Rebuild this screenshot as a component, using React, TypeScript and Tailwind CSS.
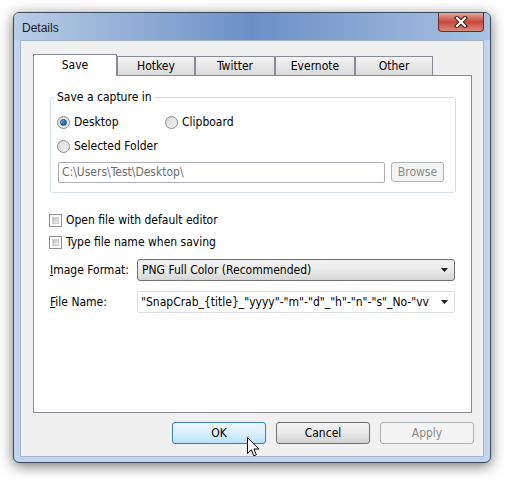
import React from 'react';

const ui = { fontFamily: '"DejaVu Sans Condensed", "DejaVu Sans", sans-serif' };

function Radio({ checked }: { checked?: boolean }) {
  return (
    <span className="w-[13px] h-[13px] rounded-full border border-[#8b8b8b] bg-gradient-to-br from-[#d6d6d6] to-[#f6f6f6] flex items-center justify-center shrink-0">
      {checked && (
        <span className="w-[7px] h-[7px] rounded-full bg-gradient-to-br from-[#8fd0f5] via-[#2f78c2] to-[#1b4f94] border border-[#1f4d86]" />
      )}
    </span>
  );
}

function Checkbox() {
  return (
    <span className="w-[13px] h-[13px] border border-[#8f8f8f] bg-white p-[2px] shrink-0">
      <span className="block w-full h-full bg-gradient-to-br from-[#bcbcbc] to-[#f2f2f2] border border-[#cfcfcf]" />
    </span>
  );
}

function Arrow() {
  return (
    <svg width="7" height="4" viewBox="0 0 7 4">
      <path d="M0 0H7L3.5 4Z" fill="#1a1a1a" />
    </svg>
  );
}

function Cursor() {
  return (
    <svg className="absolute left-[74px] top-[14px] z-20" width="13" height="20" viewBox="0 0 13 20">
      <path
        d="M0.5 0.5V16.5L4.3 12.8L6.8 18.8L9.3 17.8L6.9 12H11.8Z"
        fill="#fff"
        stroke="#000"
        strokeWidth="1"
        strokeLinejoin="round"
      />
    </svg>
  );
}

export default function App() {
  const tabs = [
    { label: 'Hotkey', w: 'w-[78px]' },
    { label: 'Twitter', w: 'w-[80px]' },
    { label: 'Evernote', w: 'w-[80px]' },
    { label: 'Other', w: 'w-[78px]' },
  ];

  return (
    <div className="w-[507px] h-[480px] bg-white pl-[13px] pt-[12px]" style={ui}>
      {/* Window */}
      <div className="w-[478px] h-[451px] rounded-[6px] border border-[#3b4a5e] bg-[#c2d5ec] shadow-[0_3px_14px_rgba(0,0,0,0.55)] flex flex-col overflow-hidden">
        {/* Title bar */}
        <div className="h-[27px] flex items-start bg-gradient-to-r from-[#b9cde6] via-[#6b8fc5] to-[#a9c2e2] shrink-0">
          <span className="pl-[8px] pt-[6px] text-[12px] text-[#1b1b1b]" style={{ fontFamily: '"Liberation Sans", sans-serif' }}>
            Details
          </span>
          <div className="ml-auto mr-[6px] w-[46px] h-[19px] rounded-b-[4px] border border-t-0 border-[#6b2a24] bg-gradient-to-b from-[#e6a595] via-[#c4473c] to-[#d98b7c] flex items-center justify-center">
            <svg width="14" height="12" viewBox="0 0 14 12">
              <path d="M3 2L11 10M11 2L3 10" stroke="#3a1a16" strokeWidth="4.2" strokeLinecap="square" />
              <path d="M3 2L11 10M11 2L3 10" stroke="#fff" strokeWidth="2.2" strokeLinecap="square" />
            </svg>
          </div>
        </div>

        {/* Client */}
        <div className="mx-[6px] mb-[5px] flex-1 bg-[#f0f0f0] border border-[#a4b6cf] pl-[12px] pr-[11px] pt-[13px] flex flex-col text-[12px] leading-[15px] text-black">
          {/* Tab strip */}
          <div className="flex items-end h-[21px] relative z-10">
            <div className="w-[84px] h-[22px] mb-[-1px] bg-white border border-b-0 border-[#898c95] flex items-start justify-center pt-[3px]">
              Save
            </div>
            {tabs.map((t) => (
              <div
                key={t.label}
                className={`${t.w} h-[19px] border border-b-0 border-[#898c95] bg-gradient-to-b from-[#f4f4f4] to-[#dadada] flex items-center justify-center pt-[1px]`}
              >
                {t.label}
              </div>
            ))}
          </div>

          {/* Tab panel */}
          <div className="w-[439px] h-[338px] bg-white border border-[#898c95] pl-[16px] pt-[21px]">
            {/* Group box */}
            <div className="relative w-[406px] border border-[#d5dfe5] rounded-[3px] pl-[6px] pr-[11px] pt-[16px] pb-[9px]">
              <span className="absolute left-[4px] top-[-8px] bg-white px-[2px] leading-[15px]">Save a capture in</span>
              <div className="flex h-[16px] items-center">
                <div className="w-[108px] flex items-center gap-[4px]">
                  <Radio checked />
                  <span>Desktop</span>
                </div>
                <div className="flex items-center gap-[4px]">
                  <Radio />
                  <span>Clipboard</span>
                </div>
              </div>
              <div className="flex h-[16px] items-center gap-[4px] mt-[8px]">
                <Radio />
                <span>Selected Folder</span>
              </div>
              <div className="flex mt-[8px] gap-[6px] pl-[1px]">
                <div className="w-[327px] h-[21px] border border-[#abadb3] rounded-[2px] flex items-center px-[3px] text-[#6d6d6d]">
                  C:\Users\Test\Desktop\
                </div>
                <div className="w-[53px] h-[20px] border border-[#adb2b5] rounded-[3px] bg-[#f4f4f4] flex items-center justify-center text-[#8b8b8b]">
                  Browse
                </div>
              </div>
            </div>

            {/* Checkboxes */}
            <div className="mt-[19px] flex h-[16px] items-center gap-[4px] -ml-[1px]">
              <Checkbox />
              <span>Open file with default editor</span>
            </div>
            <div className="mt-[6px] flex h-[16px] items-center gap-[4px] -ml-[1px]">
              <Checkbox />
              <span>Type file name when saving</span>
            </div>

            {/* Image format */}
            <div className="mt-[9px] flex items-center">
              <span className="w-[87px]">
                <span className="underline">I</span>mage Format:
              </span>
              <div className="w-[318px] h-[22px] border border-[#707070] rounded-[3px] bg-gradient-to-b from-[#f2f2f2] via-[#ebebeb] to-[#d6d6d6] flex items-center pl-[4px] pr-[6px]">
                <span>PNG Full Color (Recommended)</span>
                <span className="ml-auto flex"><Arrow /></span>
              </div>
            </div>

            {/* File name */}
            <div className="mt-[10px] flex items-center">
              <span className="w-[87px]">
                <span className="underline">F</span>ile Name:
              </span>
              <div className="w-[318px] h-[22px] border border-[#dadde2] rounded-[2px] bg-white flex items-center pl-[3px] pr-[6px]">
                <span className="whitespace-nowrap overflow-hidden w-[290px]">
                  "SnapCrab_{'{'}title{'}'}_"yyyy"-"m"-"d"_"h"-"n"-"s"_No-"vv
                </span>
                <span className="ml-auto flex"><Arrow /></span>
              </div>
            </div>
          </div>

          {/* Buttons */}
          <div className="flex justify-end gap-[10px] mt-[9px] -mr-[2px]">
            <div className="relative w-[94px] h-[22px] border border-[#3c7fb1] rounded-[3px] bg-gradient-to-b from-[#edf7fd] via-[#d9f0fc] to-[#b9e2fb] flex items-center justify-center">
              OK
              <Cursor />
            </div>
            <div className="w-[94px] h-[22px] border border-[#707070] rounded-[3px] bg-gradient-to-b from-[#f3f3f3] via-[#e8e8e8] to-[#d2d2d2] flex items-center justify-center">
              Cancel
            </div>
            <div className="w-[94px] h-[22px] border border-[#adb2b5] rounded-[3px] bg-[#f4f4f4] flex items-center justify-center text-[#8b8b8b]">
              Apply
            </div>
          </div>
        </div>
      </div>
    </div>
  );
}
